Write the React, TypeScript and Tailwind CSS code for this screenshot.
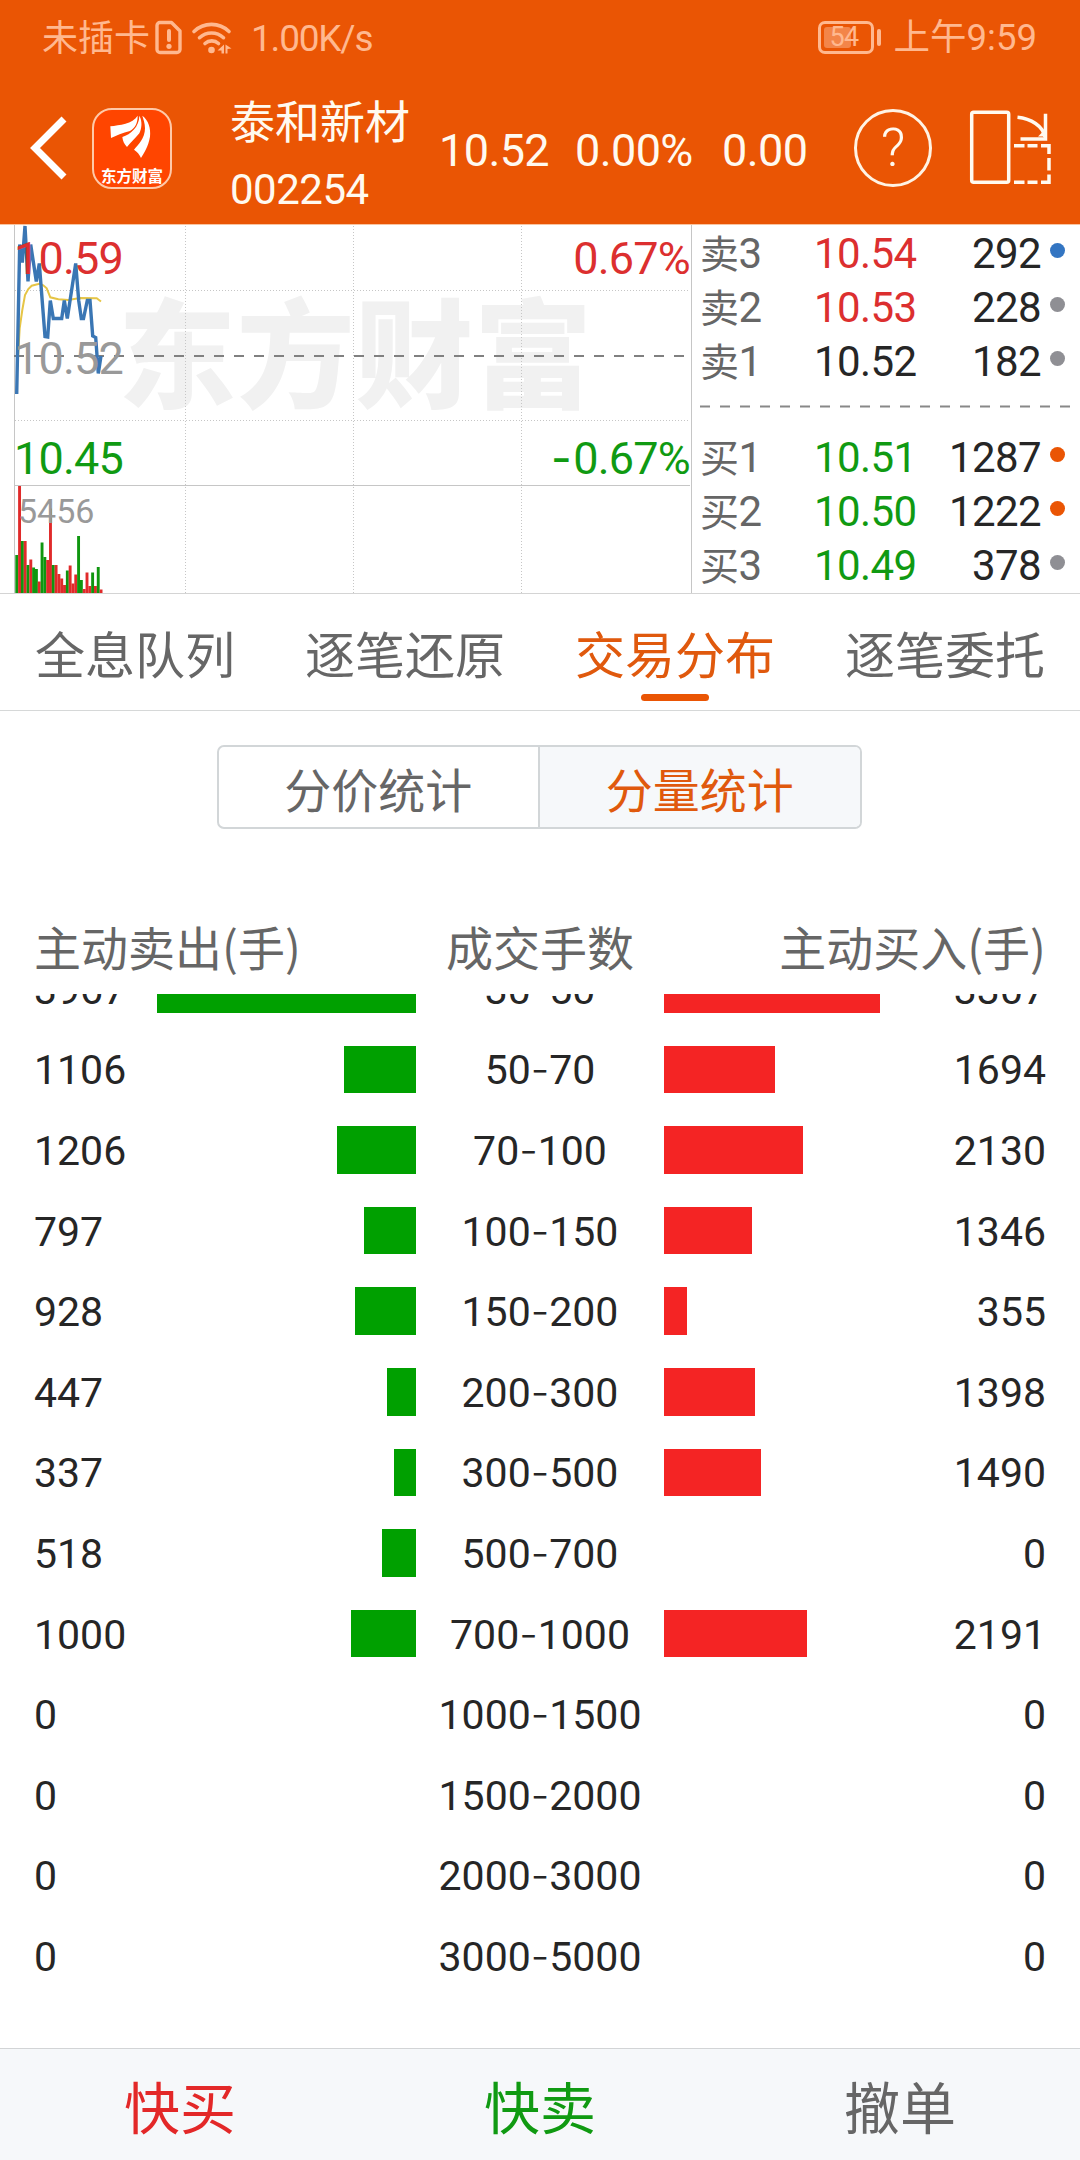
import { ReactNode } from 'react';

type Level = { label: string; n: string; price: string; qty: string; color: string; dot: string };

const asks: Level[] = [
  { label: '卖', n: '3', price: '10.54', qty: '292', color: 'text-[#dc2f2f]', dot: 'bg-[#3375c2]' },
  { label: '卖', n: '2', price: '10.53', qty: '228', color: 'text-[#dc2f2f]', dot: 'bg-[#8f8f94]' },
  { label: '卖', n: '1', price: '10.52', qty: '182', color: 'text-[#262626]', dot: 'bg-[#8f8f94]' },
];

const bids: Level[] = [
  { label: '买', n: '1', price: '10.51', qty: '1287', color: 'text-[#109a12]', dot: 'bg-[#ea5504]' },
  { label: '买', n: '2', price: '10.50', qty: '1222', color: 'text-[#109a12]', dot: 'bg-[#ea5504]' },
  { label: '买', n: '3', price: '10.49', qty: '378', color: 'text-[#109a12]', dot: 'bg-[#8f8f94]' },
];

const rows = [
  { sell: 3967, range: ['30', '50'], buy: 3307 },
  { sell: 1106, range: ['50', '70'], buy: 1694 },
  { sell: 1206, range: ['70', '100'], buy: 2130 },
  { sell: 797, range: ['100', '150'], buy: 1346 },
  { sell: 928, range: ['150', '200'], buy: 355 },
  { sell: 447, range: ['200', '300'], buy: 1398 },
  { sell: 337, range: ['300', '500'], buy: 1490 },
  { sell: 518, range: ['500', '700'], buy: 0 },
  { sell: 1000, range: ['700', '1000'], buy: 2191 },
  { sell: 0, range: ['1000', '1500'], buy: 0 },
  { sell: 0, range: ['1500', '2000'], buy: 0 },
  { sell: 0, range: ['2000', '3000'], buy: 0 },
  { sell: 0, range: ['3000', '5000'], buy: 0 },
];

const tabs = ['全息队列', '逐笔还原', '交易分布', '逐笔委托'];

// px per lot
const BAR_SCALE = 0.0653;

// [height, rising]
const volumes: [number, boolean][] = [
  [38, false], [107, true], [52, false], [52, true], [28, false], [33.5, true], [25.5, false], [24, false],
  [11.5, true], [50.5, false], [36, false], [33, true], [84.5, true], [28, false], [28, true], [19, true],
  [14.5, true], [8, true], [22.5, false], [27.5, true], [9.5, true], [18.5, true], [57, false], [13, false],
  [4, true], [20.5, true], [7, true], [20.5, false], [7, true], [26, false], [3.5, true],
];

const priceLine =
  '16.7,169 19.7,19.5 22.3,37.5 25,1 28,56.5 30.7,19.5 36.3,56.5 39.3,38.5 45,111.5 47.7,112 50.3,75.5 53.3,93.5 61.7,93.5 64.3,75.5 67.3,93.5 75.7,38.5 78.7,75.5 81.3,93.5 83.5,93.5 87.3,75.5 90,75.5 92.7,111 95.7,112.5 98.3,148.5 101,131';

const averageLine =
  '17.5,142 19.7,103 22.3,85 25,70 28.3,64 31.7,60.7 39.3,58.8 43.3,60.3 46.7,63.3 50.3,72.3 58.3,74.3 68.3,75 80,73 96.7,73.3 101,76.5';

function StatusBar() {
  return (
    <div className="flex h-[74px] items-center justify-between pl-[42px] pr-[43px] text-[36px] leading-none text-[#ffb88f]">
      <div className="flex items-center">
        <span className="w-[113px] pt-[4px]">未插卡</span>
        <svg className="h-[36px] w-[28px]" viewBox="0 0 28 36" fill="none" stroke="currentColor" strokeWidth="3.4">
          <path d="M5 3.5h11.5l8.5 8.5v18.5a3 3 0 0 1-3 3H5a3 3 0 0 1-3-3v-24a3 3 0 0 1 3-3Z" strokeLinejoin="round" />
          <path d="M14 12v9" strokeWidth="4" strokeLinecap="round" />
          <circle cx="14" cy="27.3" r="2.6" fill="currentColor" stroke="none" />
        </svg>
        <svg className="ml-[8px] h-[36px] w-[42px]" viewBox="0 0 42 36" fill="none" stroke="currentColor" strokeWidth="3.6" strokeLinecap="round">
          <path d="M3 12.5a25 25 0 0 1 35 0" />
          <path d="M8.5 18.7a17.5 17.5 0 0 1 24 0" />
          <path d="M14 24.5a10 10 0 0 1 13.5 0" />
          <circle cx="20.5" cy="31" r="3.3" fill="currentColor" stroke="none" />
          <path d="M26.5 31.5l6.500-6v9h-2.500v-3ZM34.500 25.500v9h2v-4.500l4-.5Z" fill="currentColor" stroke="none" />
        </svg>
        <span className="ml-[18px] pt-[2px] text-[37px] tracking-[-1.2px]">1.00K/s</span>
      </div>
      <div className="flex items-center gap-[13px]">
        <div className="flex items-center gap-[3px]">
          <div className="flex h-[33px] w-[56px] items-center rounded-[7px] border-[3px] border-[#ffb88f] pl-[3px]">
            <div className="flex h-[21px] w-[27px] items-center rounded-[3px] bg-[#f38549] pl-[6px] text-[27px] tracking-[-0.8px]">54</div>
          </div>
          <div className="h-[17px] w-[4px] rounded-full bg-[#ffb88f]" />
        </div>
        <span className="pt-[3px] text-[36.5px]">上午9:59</span>
      </div>
    </div>
  );
}

function AppLogo() {
  return (
    <div className="flex h-[81px] w-[80px] flex-col items-center rounded-[20px] border-2 border-[#ffc9a8] bg-[#ff4500] pt-[4px]">
      <svg className="h-[46px] w-[44px]" viewBox="90 57 132 138" fill="#fff">
        <path d="M91 94C118 90 158 87 173 62C173 84 166 98 150 108C128 113 108 122 93 129Z" />
        <path d="M127 126C152 118 178 95 178 62C188 80 185 100 178 115C165 130 151 144 141 156C133 148 128 138 127 126Z" />
        <path d="M187 62C205 75 213 100 210 125C205 155 191 175 183 189C178 178 172 170 162 164C174 150 195 130 195 100C195 85 190 72 187 62Z" />
      </svg>
      <span className="mt-[7px] whitespace-nowrap font-['Noto_Sans_CJK_SC',sans-serif] text-[15.5px] font-bold leading-[16px] text-white">东方财富</span>
    </div>
  );
}

function TitleBar() {
  return (
    <div className="flex h-[148px] items-center text-[#fffaf0]">
      <svg className="ml-[28px] h-[64px] w-[40px]" viewBox="0 0 40 64" fill="none" stroke="#fff" strokeWidth="7">
        <path d="M36 3L7 32L36 61" />
      </svg>
      <div className="ml-[24px]">
        <AppLogo />
      </div>
      <div className="ml-[58px] flex w-[209px] flex-col pt-[18px]">
        <span className="text-[45px] leading-[66px]">泰和新材</span>
        <span className="text-[42px] leading-[66px] tracking-[-0.5px]">002254</span>
      </div>
      <div className="flex w-[415px] pt-[4px] text-[45px] leading-none tracking-[-0.6px]">
        <span className="w-[136px]">10.52</span>
        <span className="w-[147px]">0.00%</span>
        <span>0.00</span>
      </div>
      <div className="flex size-[78px] items-center justify-center rounded-full border-[3.5px] border-[#fff3e4] text-[54px] font-light leading-none">?</div>
      <svg className="ml-[36px] h-[78px] w-[86px]" viewBox="0 0 86 78" fill="none" stroke="currentColor" strokeWidth="3.5">
        <rect x="3.7" y="3.3" width="37" height="70" rx="2" />
        <path d="M49.5 8.2C63 9.500 75 17 77 28" />
        <path d="M52.500 30H77.500V4.700" />
        <path d="M70 27.500H77.500V20Z" fill="currentColor" stroke="none" />
        <path d="M46 36.700H56.500M59.500 36.700H69.500M73 36.700H81V45M81 49V61.500M81 65.500V73.300H73M69.500 73.300H59.500M56.500 73.300H46" />
      </svg>
    </div>
  );
}

function MinuteChart() {
  return (
    <svg className="block h-[368px] w-[693px] shrink-0" viewBox="0 0 693 368" fill="none">
      <text x="118" y="174" fontSize="118" fontWeight="900" fill="#f1f1f1" className="font-['Noto_Sans_CJK_SC',sans-serif]" textLength="474">东方财富</text>
      <g stroke="#c6c6c6" strokeWidth="1" shapeRendering="crispEdges">
        <path d="M14.5 0V368M691.5 0V368M14 260.5H690" />
        <path d="M185.5 1V368M353.5 1V368M521.5 1V368M15 65.5H690M15 195.5H690" strokeDasharray="1 2" />
      </g>
      <path d="M14 131H686" stroke="#808080" strokeWidth="2" strokeDasharray="10 10" />
      {volumes.map(([h, up], i) => (
        <rect key={i} x={15.3 + i * 2.81} y={368 - h} width="2.9" height={h} fill={up ? '#e02a2a' : '#0f960f'} />
      ))}
      <polyline points={averageLine} stroke="#e6c546" strokeWidth="2" />
      <polyline points={priceLine} stroke="#3a76b4" strokeWidth="3.4" />
      <g fontSize="45" letterSpacing="-0.8">
        <text x="14" y="48.5" fill="#dc2f2f">10.59</text>
        <text x="14" y="148.5" fill="#999">10.52</text>
        <text x="14" y="249" fill="#109a12">10.45</text>
        <text x="690" y="48.5" fill="#dc2f2f" textAnchor="end">0.67%</text>
        <text x="690" y="249" fill="#109a12" textAnchor="end">
          <tspan className="font-['Inter',sans-serif]" letterSpacing="1.5">-</tspan>0.67%
        </text>
      </g>
      <text x="18" y="298" fontSize="34" fill="#999">5456</text>
    </svg>
  );
}

function LevelRow({ level }: { level: Level }) {
  return (
    <div className="flex h-[54px] items-center text-[42px] leading-none tracking-[-0.6px]">
      <span className="w-[114px] text-[#666]">
        <span className="text-[39px]">{level.label}</span>
        {level.n}
      </span>
      <span className={`w-[110px] ${level.color}`}>{level.price}</span>
      <span className="flex-1 text-right text-[#262626]">{level.qty}</span>
      <span className={`mb-[7px] ml-[9px] size-[15px] rounded-full ${level.dot}`} />
    </div>
  );
}

function OrderBook() {
  return (
    <div className="flex min-w-0 flex-1 flex-col pl-[7px] pr-[15px] pt-[2px]">
      {asks.map((l) => (
        <LevelRow key={l.label + l.n} level={l} />
      ))}
      <svg className="h-[42px] w-[371px]" viewBox="0 0 371 42">
        <path d="M0 17.5H371" stroke="#888" strokeWidth="2" strokeDasharray="10 10" />
      </svg>
      {bids.map((l) => (
        <LevelRow key={l.label + l.n} level={l} />
      ))}
    </div>
  );
}

function Cjk({ children, className = '' }: { children: ReactNode; className?: string }) {
  return <span className={`font-['Noto_Sans_CJK_SC',sans-serif] leading-none ${className}`}>{children}</span>;
}

export default function App() {
  return (
    <div className="flex h-[2160px] w-[1080px] flex-col overflow-hidden bg-white font-['Roboto','Noto_Sans_CJK_SC',sans-serif]">
      {/* Header */}
      <div className="h-[225px] shrink-0 border-b border-[#f9c4a0] bg-[#ea5504]">
        <StatusBar />
        <TitleBar />
      </div>

      {/* Quote */}
      <div className="flex h-[369px] shrink-0 border-b border-[#d4d4d4]">
        <MinuteChart />
        <OrderBook />
      </div>

      {/* Tabs */}
      <div className="grid h-[117px] shrink-0 grid-cols-4 border-b border-[#d6d8d8]">
        {tabs.map((tab) => {
          const active = tab === '交易分布';
          return (
            <div key={tab} className={`flex flex-col items-center pt-[33px] ${active ? 'text-[#e0590d]' : 'text-[#666]'}`}>
              <Cjk className="text-[50px]">{tab}</Cjk>
              {active && <div className="mt-[17px] h-[7px] w-[68px] rounded-full bg-[#ea5504]" />}
            </div>
          );
        })}
      </div>

      {/* Segmented control */}
      <div className="ml-[217px] mt-[34px] grid h-[84px] w-[645px] shrink-0 grid-cols-2 overflow-hidden rounded-[7px] border-2 border-[#d2d6d8] text-[47px]">
        <div className="flex items-center justify-center border-r-2 border-[#d2d6d8] text-[#666]">
          <Cjk>分价统计</Cjk>
        </div>
        <div className="flex items-center justify-center bg-[#f6f8fa] text-[#e0590d]">
          <Cjk>分量统计</Cjk>
        </div>
      </div>

      {/* Distribution */}
      <div className="mt-[93px] flex h-[72px] shrink-0 justify-between px-[34px] text-[47px] text-[#666]">
        <Cjk className="w-[300px]">主动卖出(手)</Cjk>
        <Cjk>成交手数</Cjk>
        <Cjk className="w-[300px] text-right">主动买入(手)</Cjk>
      </div>
      <div className="h-[1054px] shrink-0 overflow-hidden text-[41px] leading-none text-[#262626]">
        <div className="-mt-[45.5px]">
          {rows.map((row) => (
            <div key={row.range[0]} className="flex h-[80.6px] items-center px-[34px]">
              <span className="w-[110px] pt-[3px]">{row.sell}</span>
              <div className="flex w-[272px] justify-end">
                <div className="h-[47.5px] bg-[#00a000]" style={{ width: row.sell * BAR_SCALE }} />
              </div>
              <span className="w-[248px] pt-[3px] text-center">
                {row.range[0]}
                <span className="font-['Inter',sans-serif] font-light leading-[0]">-</span>
                {row.range[1]}
              </span>
              <div className="flex-1">
                <div className="h-[47.5px] bg-[#f42424]" style={{ width: row.buy * BAR_SCALE }} />
              </div>
              <span className="w-[110px] pt-[3px] text-right">{row.buy}</span>
            </div>
          ))}
        </div>
      </div>

      {/* Trade actions */}
      <div className="grid flex-1 grid-cols-3 items-center border-t border-[#d2d4d6] bg-[#f6f8fa] text-center text-[56px]">
        <Cjk className="text-[#e32828]">快买</Cjk>
        <Cjk className="text-[#109a12]">快卖</Cjk>
        <Cjk className="text-[#666]">撤单</Cjk>
      </div>
    </div>
  );
}
